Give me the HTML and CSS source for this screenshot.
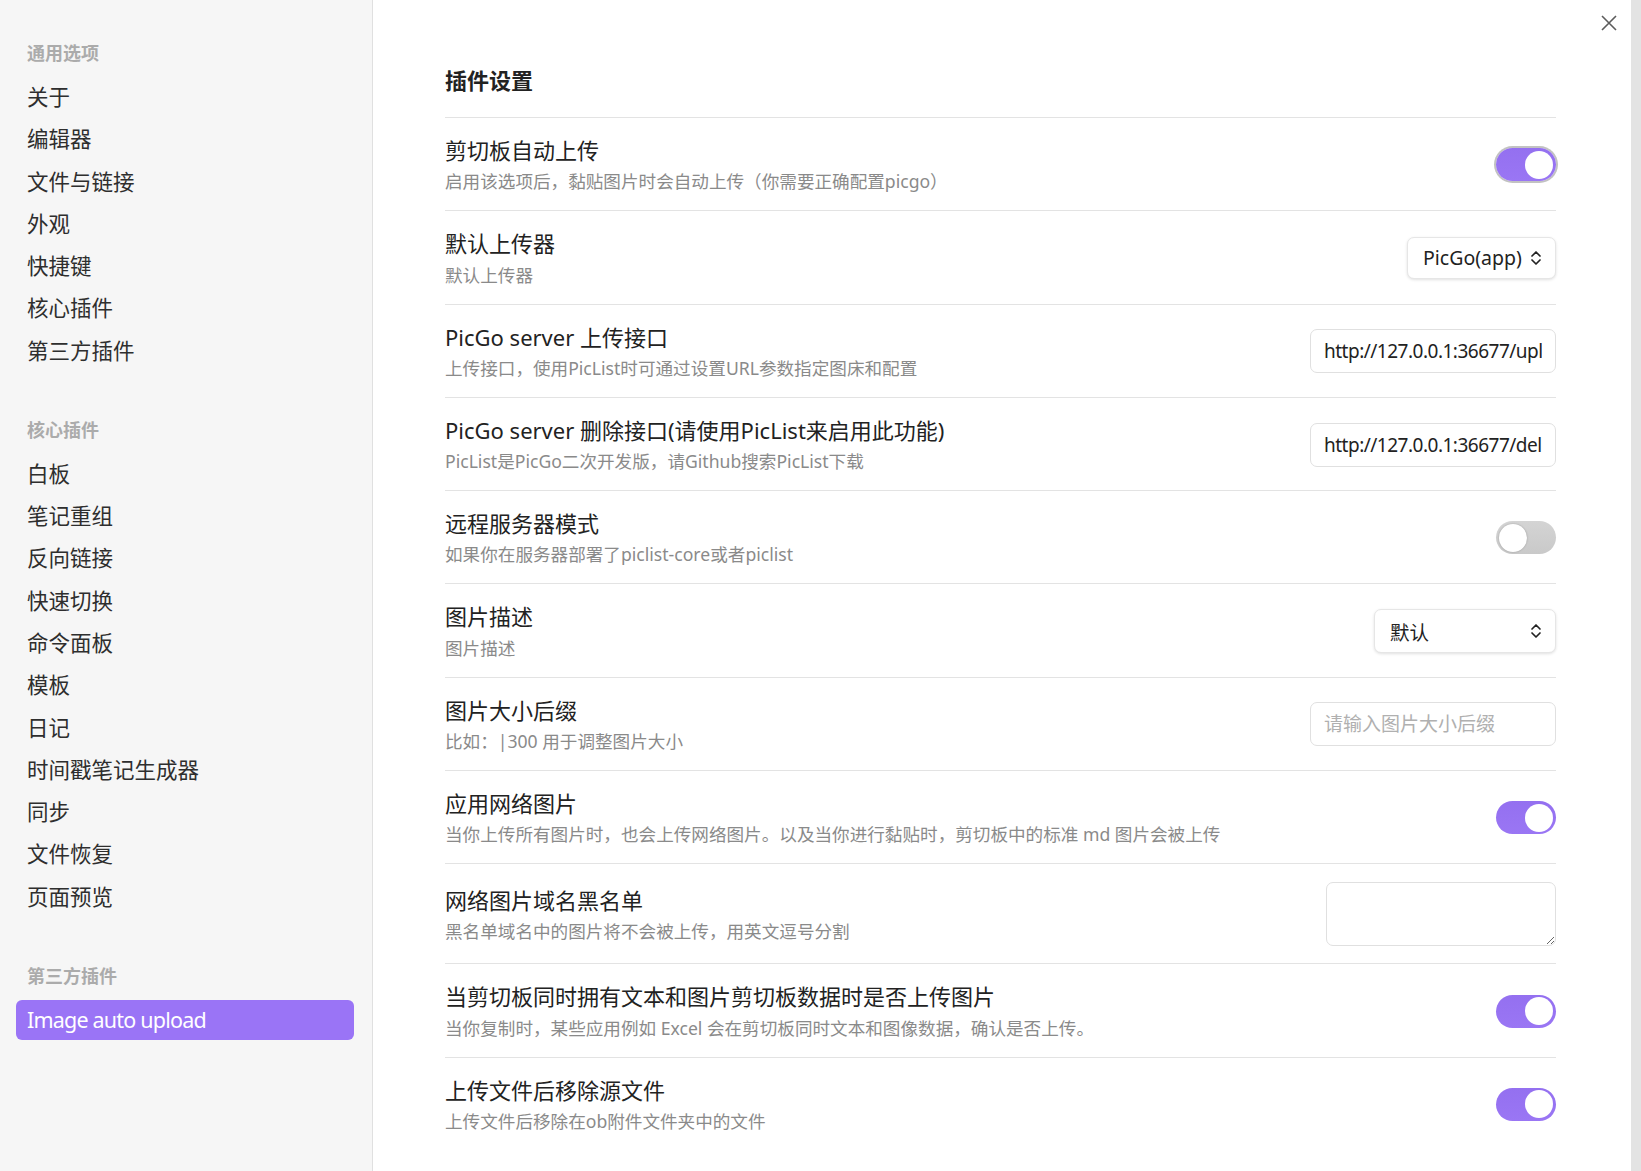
FILE: index.html
```html
<!DOCTYPE html>
<html lang="zh-CN">
<head>
  <meta charset="UTF-8" />
  <meta name="viewport" content="width=device-width, initial-scale=1.0" />
  <title>设置 - Image auto upload</title>
  <link rel="stylesheet" href="styles.css">
</head>
<body>
  <div class="app">
    <nav class="sidebar">
      <div class="nav-group">
        <div class="nav-header">通用选项</div>
        <div class="nav-item">关于</div>
        <div class="nav-item">编辑器</div>
        <div class="nav-item">文件与链接</div>
        <div class="nav-item">外观</div>
        <div class="nav-item">快捷键</div>
        <div class="nav-item">核心插件</div>
        <div class="nav-item">第三方插件</div>
      </div>
      <div class="nav-group">
        <div class="nav-header">核心插件</div>
        <div class="nav-item">白板</div>
        <div class="nav-item">笔记重组</div>
        <div class="nav-item">反向链接</div>
        <div class="nav-item">快速切换</div>
        <div class="nav-item">命令面板</div>
        <div class="nav-item">模板</div>
        <div class="nav-item">日记</div>
        <div class="nav-item">时间戳笔记生成器</div>
        <div class="nav-item">同步</div>
        <div class="nav-item">文件恢复</div>
        <div class="nav-item">页面预览</div>
      </div>
      <div class="nav-group">
        <div class="nav-header">第三方插件</div>
        <div class="nav-item active">Image auto upload</div>
      </div>
    </nav>

    <main class="content">
      <button class="close-btn" aria-label="关闭">
        <svg width="16" height="16" viewBox="0 0 16 16"><path d="M1 1L15 15M15 1L1 15" stroke="#5c5c5c" stroke-width="1.6" fill="none"/></svg>
      </button>

      <h2 class="page-title">插件设置</h2>

      <div class="setting-item">
        <div class="setting-info">
          <div class="setting-name">剪切板自动上传</div>
          <div class="setting-desc">启用该选项后，黏贴图片时会自动上传（你需要正确配置picgo）</div>
        </div>
        <div class="setting-control">
          <div class="toggle on focused"><span class="knob"></span></div>
        </div>
      </div>

      <div class="setting-item">
        <div class="setting-info">
          <div class="setting-name">默认上传器</div>
          <div class="setting-desc">默认上传器</div>
        </div>
        <div class="setting-control">
          <div class="dropdown uploader">
            <span>PicGo(app)</span>
            <svg width="12" height="18" viewBox="0 0 12 18"><path d="M2 7L6 3L10 7M2 11L6 15L10 11" stroke="#222" stroke-width="1.7" fill="none" stroke-linecap="round" stroke-linejoin="round"/></svg>
          </div>
        </div>
      </div>

      <div class="setting-item">
        <div class="setting-info">
          <div class="setting-name">PicGo server 上传接口</div>
          <div class="setting-desc">上传接口，使用PicList时可通过设置URL参数指定图床和配置</div>
        </div>
        <div class="setting-control">
          <input class="text-input" type="text" value="http://127.0.0.1:36677/upload">
        </div>
      </div>

      <div class="setting-item">
        <div class="setting-info">
          <div class="setting-name">PicGo server 删除接口(请使用PicList来启用此功能)</div>
          <div class="setting-desc">PicList是PicGo二次开发版，请Github搜索PicList下载</div>
        </div>
        <div class="setting-control">
          <input class="text-input" type="text" value="http://127.0.0.1:36677/delete">
        </div>
      </div>

      <div class="setting-item">
        <div class="setting-info">
          <div class="setting-name">远程服务器模式</div>
          <div class="setting-desc">如果你在服务器部署了piclist-core或者piclist</div>
        </div>
        <div class="setting-control">
          <div class="toggle"><span class="knob"></span></div>
        </div>
      </div>

      <div class="setting-item">
        <div class="setting-info">
          <div class="setting-name">图片描述</div>
          <div class="setting-desc">图片描述</div>
        </div>
        <div class="setting-control">
          <div class="dropdown caption">
            <span>默认</span>
            <svg width="12" height="18" viewBox="0 0 12 18"><path d="M2 7L6 3L10 7M2 11L6 15L10 11" stroke="#222" stroke-width="1.7" fill="none" stroke-linecap="round" stroke-linejoin="round"/></svg>
          </div>
        </div>
      </div>

      <div class="setting-item">
        <div class="setting-info">
          <div class="setting-name">图片大小后缀</div>
          <div class="setting-desc">比如：|300 用于调整图片大小</div>
        </div>
        <div class="setting-control">
          <input class="text-input" type="text" placeholder="请输入图片大小后缀">
        </div>
      </div>

      <div class="setting-item">
        <div class="setting-info">
          <div class="setting-name">应用网络图片</div>
          <div class="setting-desc">当你上传所有图片时，也会上传网络图片。以及当你进行黏贴时，剪切板中的标准 md 图片会被上传</div>
        </div>
        <div class="setting-control">
          <div class="toggle on"><span class="knob"></span></div>
        </div>
      </div>

      <div class="setting-item">
        <div class="setting-info">
          <div class="setting-name">网络图片域名黑名单</div>
          <div class="setting-desc">黑名单域名中的图片将不会被上传，用英文逗号分割</div>
        </div>
        <div class="setting-control">
          <textarea class="text-area"></textarea>
        </div>
      </div>

      <div class="setting-item">
        <div class="setting-info">
          <div class="setting-name">当剪切板同时拥有文本和图片剪切板数据时是否上传图片</div>
          <div class="setting-desc">当你复制时，某些应用例如 Excel 会在剪切板同时文本和图像数据，确认是否上传。</div>
        </div>
        <div class="setting-control">
          <div class="toggle on"><span class="knob"></span></div>
        </div>
      </div>

      <div class="setting-item">
        <div class="setting-info">
          <div class="setting-name">上传文件后移除源文件</div>
          <div class="setting-desc">上传文件后移除在ob附件文件夹中的文件</div>
        </div>
        <div class="setting-control">
          <div class="toggle on"><span class="knob"></span></div>
        </div>
      </div>
    </main>

    <div class="scroll-track"></div>
  </div>
</body>
</html>
```

FILE: styles.css
```css
html, body {
  margin: 0;
  height: 100%;
}

body {
  font-family: "Noto Sans", "Noto Sans CJK SC", sans-serif;
  color: #222;
  background-color: #fff;
  overflow: hidden;
}

.app {
  display: flex;
  height: 100vh;
}

/* sidebar */
.sidebar {
  width: 338px;
  flex: none;
  background-color: #f6f6f6;
  border-right: 1px solid #e0e0e0;
  padding: 41px 18px 0 16px;
}

.nav-group {
  margin-bottom: 47px;
}

.nav-header {
  font-size: 18px;
  font-weight: bold;
  line-height: 24px;
  color: #ababab;
  padding-left: 11px;
  margin-bottom: 12px;
}

.nav-item {
  font-size: 21.5px;
  line-height: 30px;
  padding: 5px 11px;
  margin-bottom: 2.3px;
  color: #2e2e2e;
  border-radius: 6px;
}

.nav-item.active {
  letter-spacing: -0.8px;
  background-color: #9a74f6;
  color: #fff;
}

/* main panel */
.content {
  position: relative;
  flex: 1;
  padding: 66px 75px 0 72px;
}

.close-btn {
  position: absolute;
  top: 13px;
  right: 12px;
  width: 20px;
  height: 20px;
  padding: 2px;
  border: none;
  background: none;
}

.page-title {
  font-size: 22px;
  font-weight: bold;
  line-height: 29px;
  margin: 0 0 22px;
}

.setting-item {
  display: flex;
  align-items: center;
  border-top: 1px solid #e3e3e3;
  padding: 18px 0 17px;
}

.setting-info {
  flex: 1;
}

.setting-name {
  font-size: 22px;
  line-height: 29.3px;
}

.setting-desc {
  font-size: 17.6px;
  line-height: 23px;
  margin-top: 5px;
  color: #8a8a8a;
}

.setting-control {
  flex: none;
  display: flex;
  justify-content: flex-end;
  margin-left: 20px;
}

/* toggle */
.toggle {
  position: relative;
  width: 60px;
  height: 33px;
  border-radius: 17px;
  background: linear-gradient(180deg, #d4d4d4, #c9c9c9);
}

.toggle .knob {
  position: absolute;
  top: 2.5px;
  left: 2.5px;
  width: 28px;
  height: 28px;
  border-radius: 50%;
  background-color: #fff;
  box-shadow: 0 0 2px rgba(0, 0, 0, 0.25);
}

.toggle.on {
  background: linear-gradient(180deg, #9470f0, #9a76f4);
}

.toggle.on .knob {
  left: auto;
  right: 3px;
  box-shadow: none;
}

.toggle.focused {
  box-shadow: 0 0 0 2px #c2c2c2;
}

/* dropdowns */
.dropdown {
  display: flex;
  align-items: center;
  justify-content: space-between;
  box-sizing: border-box;
  height: 42px;
  padding: 0 13px 0 15px;
  font-size: 19.5px;
  background-color: #fff;
  border: 1px solid #e6e6e6;
  border-radius: 7px;
  box-shadow: 0 1px 3px rgba(0, 0, 0, 0.12);
}

.dropdown.uploader {
  width: 149px;
}

.dropdown.caption {
  width: 182px;
  height: 44px;
}

/* text fields */
.text-input {
  box-sizing: border-box;
  width: 246px;
  height: 44px;
  padding: 0 13px;
  font-family: "Noto Sans", "Noto Sans CJK SC", sans-serif;
  font-size: 19px;
  letter-spacing: -0.5px;
  color: #222;
  border: 1px solid #e0e0e0;
  border-radius: 7px;
  outline: none;
}

.text-input::placeholder {
  color: #b0b0b0;
  letter-spacing: 0;
}

.text-area {
  box-sizing: border-box;
  width: 230px;
  height: 64px;
  border: 1px solid #e0e0e0;
  border-radius: 7px;
  font-family: inherit;
  outline: none;
}

.scroll-track {
  width: 10px;
  flex: none;
  background-color: #e3e3e3;
}
```
